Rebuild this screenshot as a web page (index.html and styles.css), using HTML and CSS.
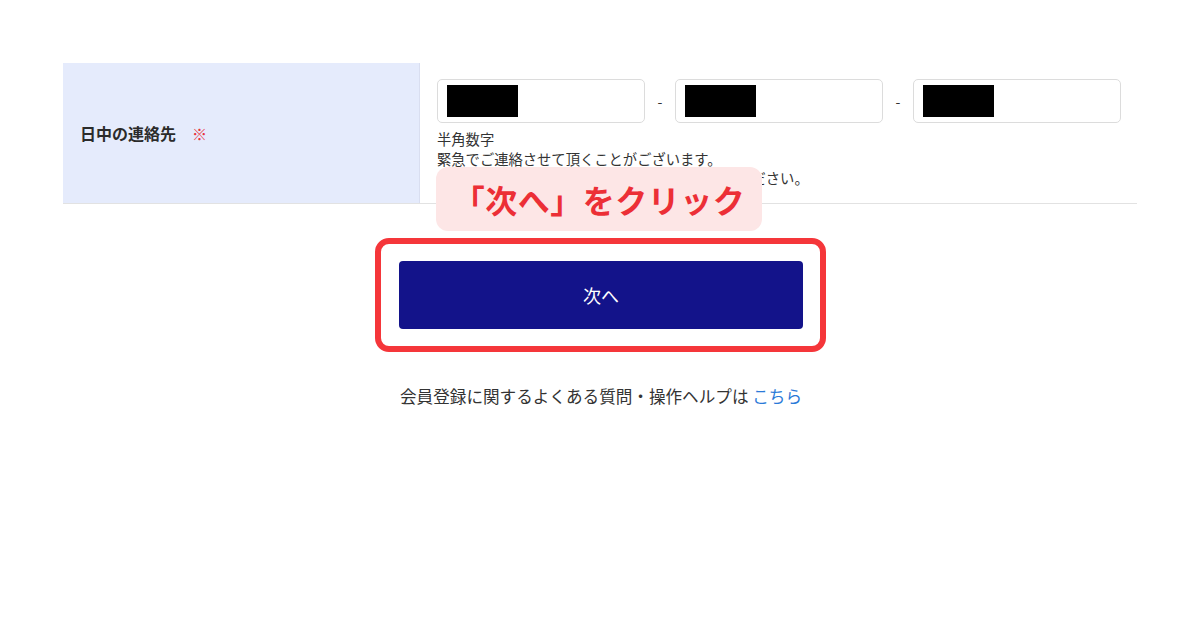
FILE: index.html
```html
<!DOCTYPE html>
<html lang="ja">
<head>
<meta charset="utf-8"/>
<title>会員登録</title>
<link rel="stylesheet" href="styles.css">
</head>
<body>
<div class="page">
    <div class="form-row">
        <div class="form-label">日中の連絡先<span class="required">※</span></div>
        <div class="form-field">
            <div class="tel-inputs">
                <div class="tel-box"><span class="masked"></span></div>
                <div class="tel-dash">-</div>
                <div class="tel-box"><span class="masked"></span></div>
                <div class="tel-dash">-</div>
                <div class="tel-box"><span class="masked"></span></div>
            </div>
            <div class="note">
                <div>半角数字</div>
                <div>緊急でご連絡させて頂くことがございます。</div>
                <div>（携帯電話等日中に連絡のとれる番号をご入力ください。</div>
            </div>
            <div class="callout">「次へ」をクリック</div>
        </div>
    </div>

    <div class="next-area">
        <div class="highlight">
            <button class="next-btn">次へ</button>
        </div>
    </div>

    <p class="help">会員登録に関するよくある質問・操作ヘルプは <a href="#">こちら</a></p>
</div>
</body>
</html>
```

FILE: styles.css
```css
body {
    margin: 0;
    background: #fff;
    color: #333;
    font-family: "Noto Sans CJK JP", "Noto Sans", sans-serif;
}
.page {
    width: 1074px;
    margin-left: 63px;
    padding-top: 63px;
}
.form-row {
    display: grid;
    grid-template-columns: 357px 1fr;
    height: 140px;
    border-bottom: 1px solid #e2e2e2;
}
.form-label {
    background-color: #e5ebfc;
    border-right: 1px solid #d9def0;
    display: flex;
    align-items: center;
    padding-left: 17px;
    font-size: 16px;
    font-weight: bold;
    color: #2b2b2b;
}
.required {
    color: #e8343c;
    font-weight: normal;
    font-size: 15px;
    margin-left: 16px;
}
.form-field {
    position: relative;
    padding: 16px 0 0 17px;
}
.tel-inputs {
    display: flex;
    align-items: center;
}
.tel-box {
    width: 197px;
    height: 42px;
    border: 1px solid #dcdcdc;
    border-radius: 5px;
    display: flex;
    align-items: center;
    padding-left: 9px;
}
.masked {
    display: block;
    width: 71px;
    height: 32px;
    background: #000;
}
.tel-dash {
    width: 30px;
    text-align: center;
    font-size: 14px;
    color: #333;
}
.note {
    margin-top: 6px;
    font-size: 14.3px;
    line-height: 19.5px;
    color: #333;
}
.callout {
    position: absolute;
    left: 16px;
    top: 104px;
    width: 326px;
    height: 64px;
    background: #fde6e6;
    border-radius: 12px;
    color: #ec2f36;
    font-size: 32px;
    font-weight: bold;
    line-height: 64px;
    text-align: center;
    letter-spacing: 0.5px;
}
.next-area {
    display: flex;
    justify-content: center;
    margin-top: 34px;
    padding-left: 1px;
}
.highlight {
    border: 6px solid #f5363a;
    border-radius: 14px;
    padding: 17px 17px 17px 18px;
    background: #fff;
}
.next-btn {
    display: block;
    width: 404px;
    height: 68px;
    border: none;
    border-radius: 4px;
    background: #13138a;
    color: #fff;
    font-family: "Noto Sans CJK JP", "Noto Sans", sans-serif;
    font-size: 18px;
}
.help {
    margin: 33px 0 0;
    text-align: center;
    font-size: 16.6px;
    line-height: 22px;
    color: #333;
    padding-left: 2px;
}
.help a {
    color: #2a7ad8;
    text-decoration: none;
}
```
